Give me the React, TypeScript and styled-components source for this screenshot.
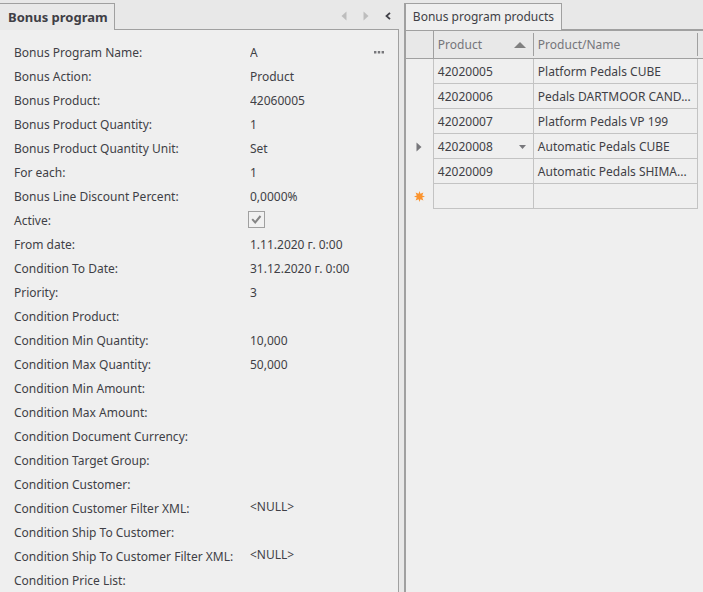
import React from "react";
import styled, { createGlobalStyle } from "styled-components";

const line = "#a0a0a0";
const cellLine = "#c3c3c3";
const ink = "#3f3f46";

const GlobalStyle = createGlobalStyle`
  *, *::before, *::after { box-sizing: border-box; }
  body {
    margin: 0;
    background: #e8e8e8;
    color: ${ink};
    font: 12px/22px "Noto Sans", "Open Sans", sans-serif;
  }
  button, input { font: inherit; color: inherit; }
`;

const Page = styled.main`
  display: grid;
  grid-template-columns: minmax(0, 4fr) minmax(0, 3fr);
  column-gap: 5px;
  min-height: 100vh;
`;

const Panel = styled.section`
  display: flex;
  flex-direction: column;
  min-width: 0;
`;

const TabStrip = styled.div`
  display: flex;
  align-items: stretch;
  height: 30px;
  padding-top: 3px;
`;

const Tab = styled.button<{ $primary?: boolean }>`
  flex: none;
  padding: ${(p) => (p.$primary ? "0 6px 0 8px" : "0 7px")};
  border: 1px solid ${line};
  border-width: ${(p) => (p.$primary ? "1px 1px 0 0" : "1px 1px 0 2px")};
  background: ${(p) => (p.$primary ? "#e9e9e9" : "#efefef")};
  font-size: ${(p) => (p.$primary ? "13px" : "12px")};
  font-weight: ${(p) => (p.$primary ? 700 : 400)};
  white-space: nowrap;
`;

const StripRest = styled.div`
  display: flex;
  flex: 1;
  justify-content: flex-end;
  align-items: center;
  border-bottom: 1px solid ${line};
`;

const StripButton = styled.button`
  display: flex;
  align-items: center;
  justify-content: center;
  width: 22px;
  height: 22px;
  padding: 0;
  border: 0;
  background: none;
  color: ${ink};
  &:disabled { color: #bdbdbd; }
`;

const Form = styled.form`
  flex: 1;
  padding-top: 10px;
  border-right: 1px solid ${line};
  background: #efefef;
`;

const Field = styled.div`
  display: grid;
  grid-template-columns: 232px minmax(0, 1fr) auto;
  column-gap: 4px;
  height: 24px;
  padding: 2px 8px 0 14px;
`;

const Label = styled.label`
  white-space: nowrap;
`;

const Value = styled.input<{ $raised?: boolean }>`
  width: 100%;
  min-width: 0;
  height: ${(p) => (p.$raised ? "18px" : "22px")};
  padding: 0;
  border: 0;
  outline: 0;
  background: none;
`;

const CheckHolder = styled.span`
  display: grid;
  place-items: center;
  justify-self: start;
  width: 17px;
  height: 17px;
  margin: 1px 0 0 -2px;
  & > * { grid-area: 1 / 1; }
  svg { pointer-events: none; }
`;

const Check = styled.input`
  appearance: none;
  width: 17px;
  height: 17px;
  margin: 0;
  border: 1px solid ${line};
  background: #f1f1f1;
  &:not(:checked) + svg { visibility: hidden; }
`;

const More = styled.button`
  display: flex;
  align-items: center;
  justify-content: center;
  width: 22px;
  height: 20px;
  padding: 0;
  border: 0;
  background: none;
`;

const GridArea = styled.div`
  flex: 1;
  border-top: 1px solid ${line};
  border-left: 2px solid ${line};
  background: #efefef;
`;

const Table = styled.table`
  width: 100%;
  table-layout: fixed;
  border-collapse: separate;
  border-spacing: 0;
`;

const Col = styled.col<{ $width?: number }>`
  width: ${(p) => (p.$width ? `${p.$width}px` : "auto")};
`;

const HeadCell = styled.th<{ $corner?: boolean }>`
  height: 28px;
  padding: 0;
  border-bottom: 1px solid ${line};
  border-right: ${(p) => (p.$corner ? `1px solid ${line}` : "0")};
  background: #e8e8e8;
  color: #75757a;
  font-weight: 400;
  text-align: left;
`;

const HeadLabel = styled.div`
  display: flex;
  align-items: center;
  justify-content: space-between;
  height: 23px;
  padding: 0 7px 0 4px;
  border-right: 1px solid ${line};
`;

const Gutter = styled.td`
  padding: 0;
  border-right: 1px solid ${cellLine};
  svg { display: block; margin: 0 auto; }
`;

const Cell = styled.td`
  height: 25px;
  padding: 2px 3px 0 4px;
  border-right: 1px solid ${cellLine};
  border-bottom: 1px solid ${cellLine};
  overflow: hidden;
  text-overflow: ellipsis;
  white-space: nowrap;
`;

const CellPicker = styled.div`
  display: flex;
  align-items: center;
  justify-content: space-between;
`;

const DropButton = styled.button`
  display: flex;
  align-items: center;
  justify-content: center;
  width: 14px;
  height: 20px;
  padding: 0;
  border: 0;
  background: none;
`;

type FieldSpec = { label: string; value?: string; check?: boolean; more?: boolean };

const fields: FieldSpec[] = [
  { label: "Bonus Program Name:", value: "A", more: true },
  { label: "Bonus Action:", value: "Product" },
  { label: "Bonus Product:", value: "42060005" },
  { label: "Bonus Product Quantity:", value: "1" },
  { label: "Bonus Product Quantity Unit:", value: "Set" },
  { label: "For each:", value: "1" },
  { label: "Bonus Line Discount Percent:", value: "0,0000%" },
  { label: "Active:", check: true },
  { label: "From date:", value: "1.11.2020 г. 0:00" },
  { label: "Condition To Date:", value: "31.12.2020 г. 0:00" },
  { label: "Priority:", value: "3" },
  { label: "Condition Product:" },
  { label: "Condition Min Quantity:", value: "10,000" },
  { label: "Condition Max Quantity:", value: "50,000" },
  { label: "Condition Min Amount:" },
  { label: "Condition Max Amount:" },
  { label: "Condition Document Currency:" },
  { label: "Condition Target Group:" },
  { label: "Condition Customer:" },
  { label: "Condition Customer Filter XML:", value: "<NULL>" },
  { label: "Condition Ship To Customer:" },
  { label: "Condition Ship To Customer Filter XML:", value: "<NULL>" },
  { label: "Condition Price List:" },
];

const products = [
  { code: "42020005", name: "Platform Pedals CUBE" },
  { code: "42020006", name: "Pedals DARTMOOR CAND..." },
  { code: "42020007", name: "Platform Pedals VP 199" },
  { code: "42020008", name: "Automatic Pedals CUBE", current: true },
  { code: "42020009", name: "Automatic Pedals SHIMA..." },
];

function FieldRow({ spec, id }: { spec: FieldSpec; id: string }) {
  return (
    <Field>
      <Label htmlFor={id}>{spec.label}</Label>
      {spec.check ? (
        <CheckHolder>
          <Check id={id} type="checkbox" defaultChecked />
          <svg width="11" height="11" viewBox="0 0 11 11" aria-hidden="true">
            <path d="M1.2 5.2 4.2 8.5 9.5 2" fill="none" stroke="#858585" strokeWidth="2" />
          </svg>
        </CheckHolder>
      ) : (
        <Value id={id} defaultValue={spec.value ?? ""} $raised={spec.value === "<NULL>"} />
      )}
      {spec.more && (
        <More type="button" aria-label="More">
          <svg width="10" height="3" viewBox="0 0 10 3" fill="#77777b">
            <path d="M0 0h2.4v2.4H0zM3.8 0h2.4v2.4H3.8zM7.6 0H10v2.4H7.6z" />
          </svg>
        </More>
      )}
    </Field>
  );
}

export default function App() {
  return (
    <>
      <GlobalStyle />
      <Page>
        <Panel>
          <TabStrip>
            <Tab $primary type="button">Bonus program</Tab>
            <StripRest>
              <StripButton type="button" disabled aria-label="Previous">
                <svg width="6" height="10" viewBox="0 0 6 10"><path d="M5.5 0.5v9L0.5 5z" fill="currentColor" /></svg>
              </StripButton>
              <StripButton type="button" disabled aria-label="Next">
                <svg width="6" height="10" viewBox="0 0 6 10"><path d="M0.5 0.5v9L5.5 5z" fill="currentColor" /></svg>
              </StripButton>
              <StripButton type="button" aria-label="Collapse">
                <svg width="6" height="8" viewBox="0 0 6 8">
                  <path d="M5 .8 1.5 4 5 7.2" fill="none" stroke="currentColor" strokeWidth="1.8" />
                </svg>
              </StripButton>
            </StripRest>
          </TabStrip>
          <Form>
            {fields.map((spec, i) => (
              <FieldRow key={spec.label} spec={spec} id={`field-${i}`} />
            ))}
          </Form>
        </Panel>
        <Panel>
          <TabStrip>
            <Tab type="button">Bonus program products</Tab>
            <StripRest />
          </TabStrip>
          <GridArea>
            <Table>
              <colgroup>
                <Col $width={28} />
                <Col $width={100} />
                <Col />
                <Col $width={5} />
              </colgroup>
              <thead>
                <tr>
                  <HeadCell $corner />
                  <HeadCell aria-sort="ascending">
                    <HeadLabel>
                      Product
                      <svg width="12" height="6" viewBox="0 0 12 6"><path d="M6 0l6 6H0z" fill="#808080" /></svg>
                    </HeadLabel>
                  </HeadCell>
                  <HeadCell><HeadLabel>Product/Name</HeadLabel></HeadCell>
                  <HeadCell />
                </tr>
              </thead>
              <tbody>
                {products.map((p) => (
                  <tr key={p.code}>
                    <Gutter>
                      {p.current && (
                        <svg width="6" height="10" viewBox="0 0 6 10"><path d="M0.5 0.5v9L5.5 5z" fill="#77777b" /></svg>
                      )}
                    </Gutter>
                    <Cell>
                      {p.current ? (
                        <CellPicker>
                          {p.code}
                          <DropButton type="button" aria-label="Choose product">
                            <svg width="7" height="4" viewBox="0 0 7 4"><path d="M0 0h7L3.5 4z" fill="#77777b" /></svg>
                          </DropButton>
                        </CellPicker>
                      ) : (
                        p.code
                      )}
                    </Cell>
                    <Cell>{p.name}</Cell>
                  </tr>
                ))}
                <tr>
                  <Gutter>
                    <svg width="11" height="11" viewBox="0 0 11 11">
                      <path
                        d="M5.5 0 6.4 2.8 9.4 1.6 8.2 4.6 11 5.5 8.2 6.4 9.4 9.4 6.4 8.2 5.5 11 4.6 8.2 1.6 9.4 2.8 6.4 0 5.5 2.8 4.6 1.6 1.6 4.6 2.8z"
                        fill="#fb942f"
                      />
                    </svg>
                  </Gutter>
                  <Cell />
                  <Cell />
                </tr>
              </tbody>
            </Table>
          </GridArea>
        </Panel>
      </Page>
    </>
  );
}
